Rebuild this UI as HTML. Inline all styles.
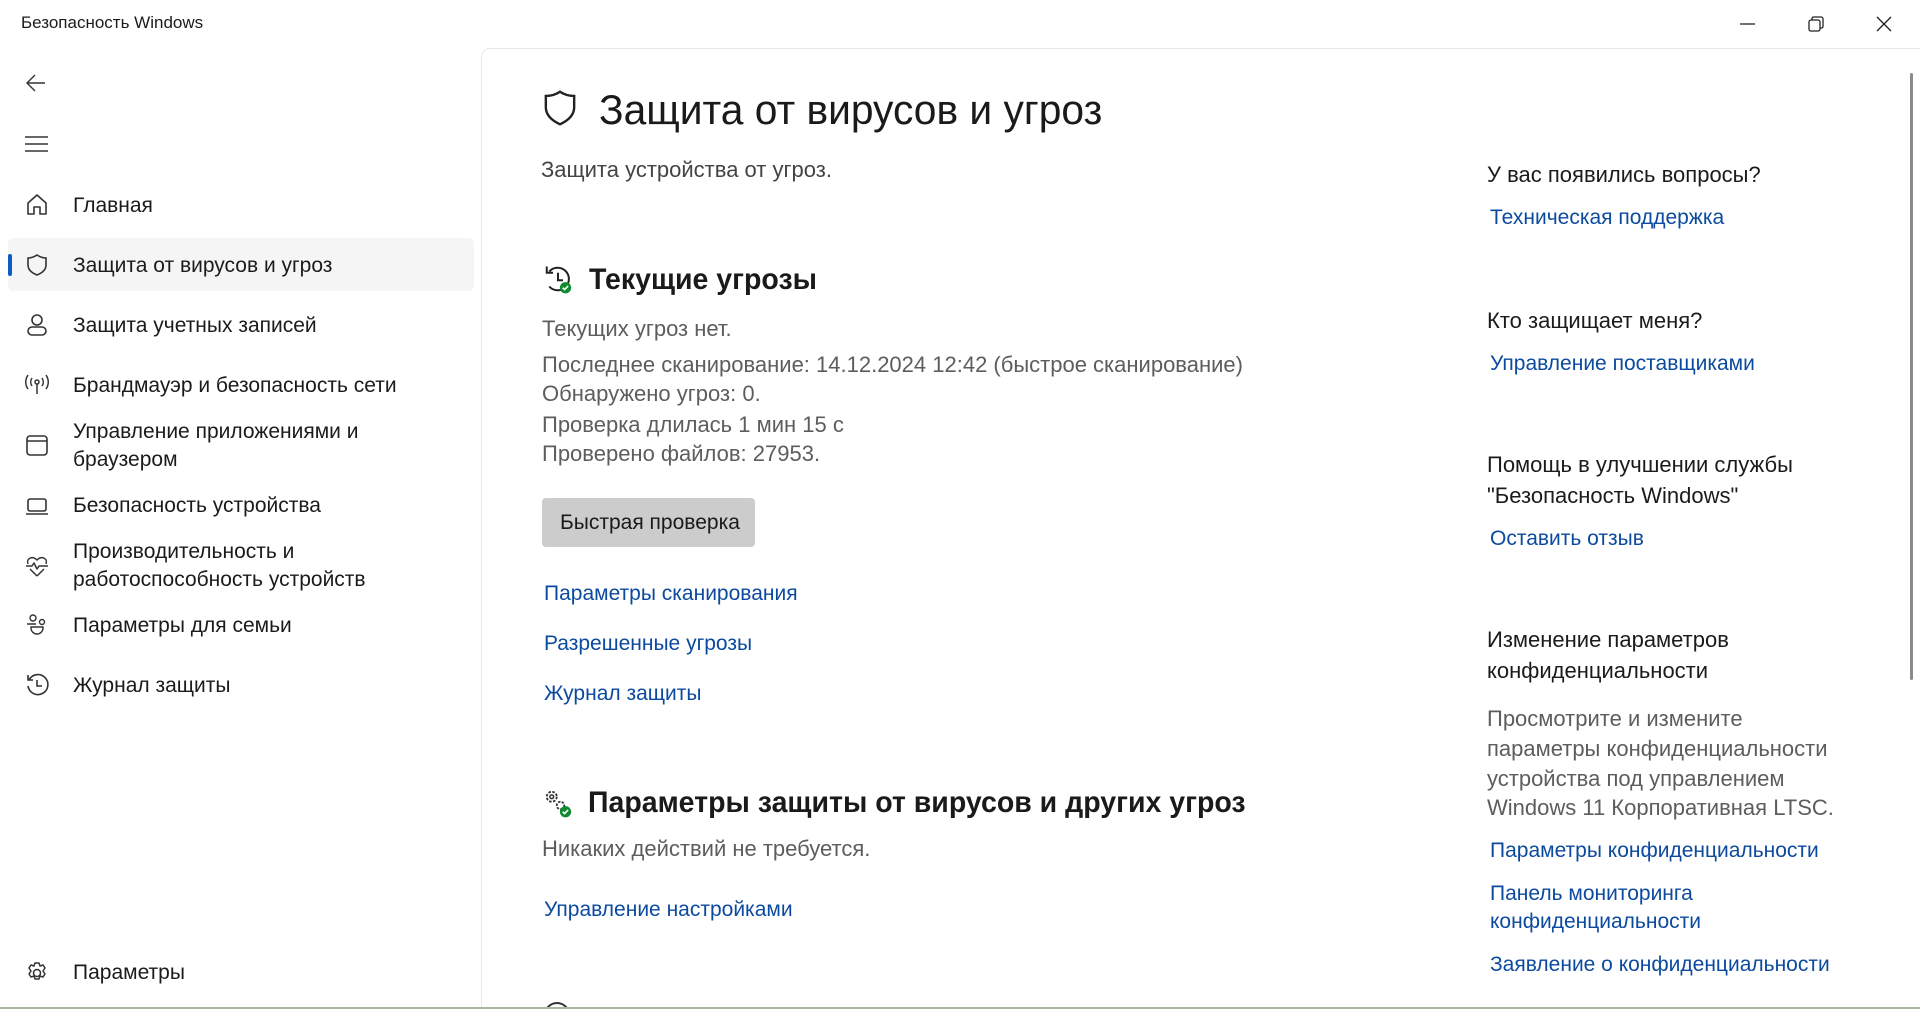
<!DOCTYPE html>
<html><head><meta charset="utf-8"><style>
*{margin:0;padding:0;box-sizing:border-box}
html,body{width:1920px;height:1009px;overflow:hidden}
body{background:#fff;font-family:"Liberation Sans","Noto Sans CJK SC",sans-serif;position:relative;color:#1a1a1a}
.a{position:absolute;white-space:nowrap}
.nav{font-size:21px;color:#1b1b1b;line-height:28px}
.ic{position:absolute;left:25px;width:24px;height:24px}
.c{font-size:22px;color:#5d5d5d;line-height:28px}
.ln{font-size:21px;color:#0b4a9e;line-height:28px}
.r{font-size:22px;line-height:30px;color:#1b1b1b}
.rl{font-size:21px;line-height:28px;color:#0b4a9e}
svg{overflow:visible}
</style></head><body>
<div class="a" style="left:21px;top:13px;font-size:17px;color:#1b1b1b">Безопасность Windows</div>
<svg class="a" style="left:1738px;top:14px" width="20" height="20"><line x1="2" y1="10" x2="17" y2="10" stroke="#222" stroke-width="1.3"/></svg>
<svg class="a" style="left:1806px;top:14px" width="20" height="20"><rect x="3" y="6" width="11" height="11" rx="2" fill="none" stroke="#222" stroke-width="1.3"/><path d="M6 6V4.5A1.5 1.5 0 0 1 7.5 3H15a2 2 0 0 1 2 2v7.5a1.5 1.5 0 0 1-1.5 1.5H14" fill="none" stroke="#222" stroke-width="1.3"/></svg>
<svg class="a" style="left:1874px;top:14px" width="20" height="20"><path d="M3 3L17 17M17 3L3 17" stroke="#222" stroke-width="1.3"/></svg>

<svg class="a" style="left:26px;top:74px" width="20" height="18"><path d="M19 9H2M9 1L1 9l8 8" fill="none" stroke="#333" stroke-width="1.4"/></svg>
<svg class="a" style="left:25px;top:135px" width="23" height="18"><path d="M0 2h23M0 9h23M0 16h23" stroke="#333" stroke-width="1.5"/></svg>

<div class="a" style="left:8px;top:238px;width:466px;height:53px;background:#f5f5f5;border-radius:6px"></div>
<div class="a" style="left:8px;top:254px;width:4px;height:22px;background:#0b5cc4;border-radius:2px"></div>

<svg class="ic" style="top:193px" viewBox="0 0 24 24"><path d="M3 21V10l9-8 9 8v11h-6v-7H9v7z" fill="none" stroke="#333" stroke-width="1.6" stroke-linejoin="round"/></svg>
<svg class="ic" style="top:253px" viewBox="0 0 24 24"><path d="M12 2c3 2 6 3 9 3v7c0 5-4 8-9 10C7 20 3 17 3 12V5c3 0 6-1 9-3z" fill="none" stroke="#333" stroke-width="1.6"/></svg>
<svg class="ic" style="top:313px" viewBox="0 0 24 24"><circle cx="12" cy="7" r="5" fill="none" stroke="#333" stroke-width="1.6"/><rect x="3" y="14" width="18" height="8" rx="4" fill="none" stroke="#333" stroke-width="1.6"/></svg>
<svg class="ic" style="top:373px" viewBox="0 0 24 24"><circle cx="12" cy="9" r="2" fill="none" stroke="#333" stroke-width="1.5"/><path d="M12 11v10M7 5a7 7 0 0 0 0 8M17 5a7 7 0 0 1 0 8M3 2a12 12 0 0 0 0 14M21 2a12 12 0 0 1 0 14" fill="none" stroke="#333" stroke-width="1.5"/></svg>
<svg class="ic" style="top:433px" viewBox="0 0 24 24"><rect x="2" y="3" width="20" height="19" rx="3" fill="none" stroke="#333" stroke-width="1.6"/><path d="M2 8h20" stroke="#333" stroke-width="1.6"/></svg>
<svg class="ic" style="top:494px" viewBox="0 0 24 24"><rect x="3" y="5" width="18" height="12" rx="2" fill="none" stroke="#333" stroke-width="1.6"/><path d="M1 20h22" stroke="#333" stroke-width="1.6"/></svg>
<svg class="ic" style="top:554px" viewBox="0 0 24 24"><path d="M3 10C1 5 7 1 12 6c5-5 11-1 9 4M12 22l-7-7M12 22l7-7M1 12h6l2-3 3 6 2-3h9" fill="none" stroke="#333" stroke-width="1.5" stroke-linejoin="round"/></svg>
<svg class="ic" style="top:613px" viewBox="0 0 24 24"><circle cx="8" cy="5" r="3" fill="none" stroke="#333" stroke-width="1.4"/><circle cx="17" cy="9" r="2.5" fill="none" stroke="#333" stroke-width="1.4"/><path d="M2 11h9M6 15a6 6 0 0 0 12 0v-1H6z" fill="none" stroke="#333" stroke-width="1.4"/></svg>
<svg class="ic" style="top:673px" viewBox="0 0 24 24"><path d="M4 7a10 10 0 1 1-1 6M3 2v5h5M12 7v6h5" fill="none" stroke="#333" stroke-width="1.6"/></svg>
<svg class="ic" style="top:961px" viewBox="0 0 24 24"><circle cx="12" cy="12" r="3.5" fill="none" stroke="#333" stroke-width="1.5"/><path d="M10 2h4l1 3 3-1 2 3-2 3 2 3-2 3-3-1-1 3h-4l-1-3-3 1-2-3 2-3-2-3 2-3 3 1z" fill="none" stroke="#333" stroke-width="1.5" stroke-linejoin="round"/></svg>

<div class="a nav" style="left:73px;top:192px">Главная</div>
<div class="a nav" style="left:73px;top:252px">Защита от вирусов и угроз</div>
<div class="a nav" style="left:73px;top:312px">Защита учетных записей</div>
<div class="a nav" style="left:73px;top:372px">Брандмауэр и безопасность сети</div>
<div class="a nav" style="left:73px;top:418px">Управление приложениями и</div>
<div class="a nav" style="left:73px;top:446px">браузером</div>
<div class="a nav" style="left:73px;top:492px">Безопасность устройства</div>
<div class="a nav" style="left:73px;top:538px">Производительность и</div>
<div class="a nav" style="left:73px;top:566px">работоспособность устройств</div>
<div class="a nav" style="left:73px;top:612px">Параметры для семьи</div>
<div class="a nav" style="left:73px;top:672px">Журнал защиты</div>
<div class="a nav" style="left:73px;top:959px">Параметры</div>

<div class="a" style="left:481px;top:48px;width:1439px;height:961px;border-left:1px solid #e8e8e8;border-top:1px solid #e8e8e8;border-top-left-radius:9px"></div>
<div class="a" style="left:1910px;top:73px;width:3px;height:607px;background:#8a8a8a;border-radius:2px"></div>

<svg class="a" style="left:543px;top:89px" width="34" height="38" viewBox="0 0 24 26"><path d="M12 1.5c3 2 6 3 10 3v8c0 6-4.5 9.5-10 12C6.5 22 2 18.5 2 12.5v-8c4 0 7-1 10-3z" fill="none" stroke="#222" stroke-width="1.7"/></svg>
<div class="a" style="left:599px;top:84px;font-size:42px;line-height:52px;color:#1a1a1a;transform:scaleX(.97);transform-origin:left center">Защита от вирусов и угроз</div>
<div class="a c" style="left:541px;top:156px;color:#444">Защита устройства от угроз.</div>

<svg class="a" style="left:543px;top:264px" width="30" height="30" viewBox="0 0 24 24"><path d="M5 6a9 9 0 1 1 0 12M3 2v5h5M12 7v6h4" fill="none" stroke="#222" stroke-width="1.6"/><circle cx="18" cy="19" r="4.5" fill="#0f8a2e"/><path d="M15.8 19l1.5 1.5 2.8-3" fill="none" stroke="#fff" stroke-width="1.3"/></svg>
<div class="a" style="left:589px;top:262px;font-size:30px;line-height:36px;font-weight:bold;color:#1a1a1a;transform:scaleX(.95);transform-origin:left center">Текущие угрозы</div>
<div class="a c" style="left:542px;top:315px">Текущих угроз нет.</div>
<div class="a c" style="left:542px;top:351px">Последнее сканирование: 14.12.2024 12:42 (быстрое сканирование)</div>
<div class="a c" style="left:542px;top:380px">Обнаружено угроз: 0.</div>
<div class="a c" style="left:542px;top:411px">Проверка длилась 1 мин 15 с</div>
<div class="a c" style="left:542px;top:440px">Проверено файлов: 27953.</div>

<div class="a" style="left:542px;top:498px;width:213px;height:49px;background:#cccccc;border-radius:4px"></div>
<div class="a" style="left:560px;top:509px;font-size:21px;line-height:28px;color:#1a1a1a">Быстрая проверка</div>

<div class="a ln" style="left:544px;top:580px">Параметры сканирования</div>
<div class="a ln" style="left:544px;top:630px">Разрешенные угрозы</div>
<div class="a ln" style="left:544px;top:680px">Журнал защиты</div>

<svg class="a" style="left:543px;top:788px" width="30" height="30" viewBox="0 0 24 24"><circle cx="7" cy="7" r="4" fill="none" stroke="#333" stroke-width="1.5" stroke-dasharray="2 1.2"/><circle cx="7" cy="7" r="1.5" fill="none" stroke="#333" stroke-width="1.2"/><circle cx="14" cy="14" r="3" fill="none" stroke="#333" stroke-width="1.4" stroke-dasharray="2 1"/><circle cx="18" cy="19" r="4.5" fill="#0f8a2e"/><path d="M15.8 19l1.5 1.5 2.8-3" fill="none" stroke="#fff" stroke-width="1.3"/></svg>
<div class="a" style="left:588px;top:785px;font-size:30px;line-height:36px;font-weight:bold;color:#1a1a1a;transform:scaleX(.95);transform-origin:left center">Параметры защиты от вирусов и других угроз</div>
<div class="a c" style="left:542px;top:835px">Никаких действий не требуется.</div>
<div class="a ln" style="left:544px;top:896px">Управление настройками</div>
<div class="a" style="left:544px;top:1002px;width:26px;height:26px;border:2px solid #333;border-radius:50%"></div>

<div class="a r" style="left:1487px;top:160px">У вас появились вопросы?</div>
<div class="a rl" style="left:1490px;top:204px">Техническая поддержка</div>
<div class="a r" style="left:1487px;top:306px">Кто защищает меня?</div>
<div class="a rl" style="left:1490px;top:350px">Управление поставщиками</div>
<div class="a r" style="left:1487px;top:450px">Помощь в улучшении службы</div>
<div class="a r" style="left:1487px;top:481px">"Безопасность Windows"</div>
<div class="a rl" style="left:1490px;top:525px">Оставить отзыв</div>
<div class="a r" style="left:1487px;top:625px">Изменение параметров</div>
<div class="a r" style="left:1487px;top:656px">конфиденциальности</div>
<div class="a r" style="left:1487px;top:704px;color:#5d5d5d">Просмотрите и измените</div>
<div class="a r" style="left:1487px;top:734px;color:#5d5d5d">параметры конфиденциальности</div>
<div class="a r" style="left:1487px;top:764px;color:#5d5d5d">устройства под управлением</div>
<div class="a r" style="left:1487px;top:793px;color:#5d5d5d">Windows 11 Корпоративная LTSC.</div>
<div class="a rl" style="left:1490px;top:837px">Параметры конфиденциальности</div>
<div class="a rl" style="left:1490px;top:880px">Панель мониторинга</div>
<div class="a rl" style="left:1490px;top:908px">конфиденциальности</div>
<div class="a rl" style="left:1490px;top:951px">Заявление о конфиденциальности</div>

<div class="a" style="left:0;top:1007px;width:1920px;height:2px;background:#a9b89a"></div>
</body></html>
